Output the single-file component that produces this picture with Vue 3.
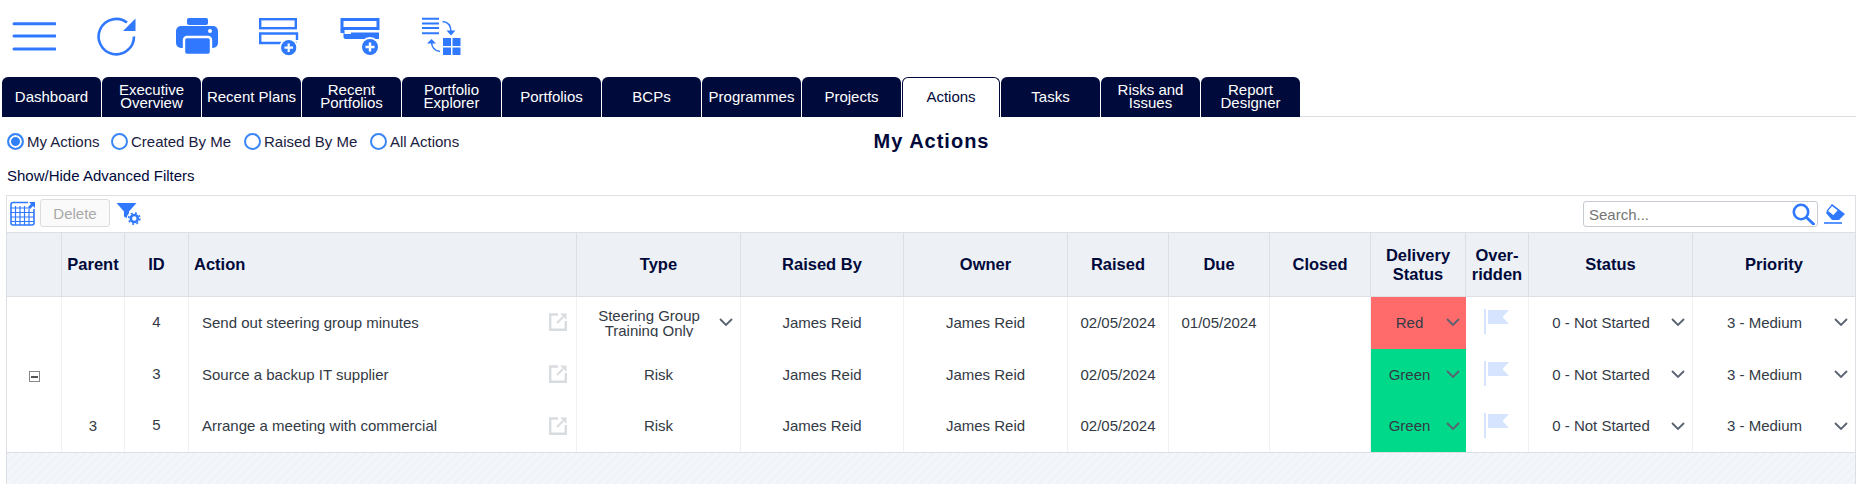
<script setup>
const iconBlue = '#3079ff'
const tabs = [
  ['Dashboard'], ['Executive', 'Overview'], ['Recent Plans'], ['Recent', 'Portfolios'],
  ['Portfolio', 'Explorer'], ['Portfolios'], ['BCPs'], ['Programmes'], ['Projects'],
  ['Actions'], ['Tasks'], ['Risks and', 'Issues'], ['Report', 'Designer']
]
const radios = [
  { label: 'My Actions', on: true, w: 104 },
  { label: 'Created By Me', on: false, w: 133 },
  { label: 'Raised By Me', on: false, w: 126 },
  { label: 'All Actions', on: false, w: 90 }
]
const headers = [
  { t: [''] }, { t: ['Parent'] }, { t: ['ID'] }, { t: ['Action'], left: true }, { t: ['Type'] },
  { t: ['Raised By'] }, { t: ['Owner'] }, { t: ['Raised'] }, { t: ['Due'] }, { t: ['Closed'] },
  { t: ['Delivery', 'Status'] }, { t: ['Over-', 'ridden'] }, { t: ['Status'] }, { t: ['Priority'] }
]
const rows = [
  { expand: false, parent: '', id: '4', action: 'Send out steering group minutes', type: ['Steering Group', 'Training Only'], select: true, due: '01/05/2024', ds: 'Red', cls: 'red' },
  { expand: true, parent: '', id: '3', action: 'Source a backup IT supplier', type: ['Risk'], select: false, due: '', ds: 'Green', cls: 'green' },
  { expand: false, parent: '3', id: '5', action: 'Arrange a meeting with commercial', type: ['Risk'], select: false, due: '', ds: 'Green', cls: 'green' }
]
</script>

<template>
  <div class="page">
    <div class="icons">
      <svg class="ic" viewBox="0 0 44 44"><g :stroke="iconBlue" stroke-width="3" stroke-linecap="round"><path d="M2 9.7H43M2 22H43M2 35H43"/></g></svg>
      <svg class="ic" viewBox="0 0 44 44"><path d="M40 22.5A17.7 17.7 0 1 1 33 8.5" fill="none" :stroke="iconBlue" stroke-width="2.6"/><path d="M41.5 4.5V17H29Z" :fill="iconBlue"/></svg>
      <svg class="ic" viewBox="0 0 44 44">
        <rect x="11" y="4" width="21" height="7" rx="2" :fill="iconBlue"/>
        <rect x="0" y="12" width="42" height="22" rx="5" :fill="iconBlue"/>
        <rect x="8" y="23" width="27" height="18" rx="3" :fill="iconBlue" stroke="#fff" stroke-width="2.4"/>
        <circle cx="34" cy="17" r="2" fill="#fff"/>
      </svg>
      <svg class="ic" viewBox="0 0 44 44">
        <rect x="2.2" y="5.2" width="35.6" height="9" fill="none" :stroke="iconBlue" stroke-width="2.4"/>
        <path d="M1 19.5H39V26M39 29H2.2V19.5" fill="none" :stroke="iconBlue" stroke-width="2.4"/>
        <circle cx="30.7" cy="33.7" r="9.6" fill="#fff"/>
        <circle cx="30.7" cy="33.7" r="7.6" :fill="iconBlue"/>
        <path d="M26.5 33.7H35M30.7 29.5V38" stroke="#fff" stroke-width="2.2"/>
      </svg>
      <svg class="ic" viewBox="0 0 44 44">
        <rect x="2" y="5.5" width="36" height="9" fill="none" :stroke="iconBlue" stroke-width="3"/>
        <path d="M0.5 15H4.5V20H11V18.5H39V25H5.5Q3.5 25 3.5 23V19H0.5Z" :fill="iconBlue"/>
        <circle cx="30" cy="33" r="10" fill="#fff"/>
        <circle cx="30" cy="33" r="8" :fill="iconBlue"/>
        <path d="M25.5 33H34.5M30 28.5V37.5" stroke="#fff" stroke-width="2.4"/>
      </svg>
      <svg class="ic" viewBox="0 0 44 44">
        <path d="M0 4.8H17M0 9.4H17M0 14H17M0 19.2H17" :stroke="iconBlue" stroke-width="2"/>
        <path d="M20.5 7.5Q29 8 29 18" fill="none" :stroke="iconBlue" stroke-width="1.5"/>
        <path d="M24.5 16.5H33.5L29 21.5Z" :fill="iconBlue"/>
        <path d="M18 37.5Q10 36.5 9.5 28" fill="none" :stroke="iconBlue" stroke-width="1.5"/>
        <path d="M5 29.5H14L9.5 25Z" :fill="iconBlue"/>
        <path d="M21 24H29V32H21ZM30.5 24H38.5V32H30.5ZM21 33.5H29V41H21ZM30.5 33.5H38.5V41H30.5Z" :fill="iconBlue"/>
      </svg>
    </div>

    <div class="tabs">
      <div v-for="t in tabs" :key="t[0]" class="tab" :class="{ active: t[0] === 'Actions' }">
        <span v-for="l in t" :key="l">{{ l }}</span>
      </div>
      <div class="tabline"></div>
    </div>

    <div class="filterbar">
      <div class="radios">
        <label v-for="r in radios" :key="r.label" class="radio" :style="{ width: r.w + 'px' }">
          <span class="dot" :class="{ on: r.on }"></span>{{ r.label }}
        </label>
      </div>
      <h1 class="title">My Actions</h1>
      <div></div>
    </div>
    <div class="advanced">Show/Hide Advanced Filters</div>

    <div class="box">
      <div class="toolbar">
        <svg class="tool-grid" viewBox="0 0 25 25">
          <path d="M18 1.5H3Q1 1.5 1 3.5V22Q1 24 3 24H22Q24 24 24 22V8" fill="none" :stroke="iconBlue" stroke-width="1.6"/>
          <path d="M1 7H20M1 11.5H24M1 16H24M1 20.5H24M5.5 5V24M10 5V24M14.5 5V24M19 8V24" :stroke="iconBlue" stroke-width="1.2"/>
          <path d="M19 1H25V7L23 5L20 8L18 6L21 3Z" :fill="iconBlue"/>
        </svg>
        <button class="del" disabled>Delete</button>
        <svg class="tool-filter" viewBox="0 0 25 25">
          <path d="M0.5 1H20.5L13 9.5V17.5L8 14.5V9.5Z" :fill="iconBlue"/>
          <circle cx="18.3" cy="16.5" r="7.6" fill="#fff"/>
          <circle cx="18.3" cy="16.5" r="3.5" fill="none" :stroke="iconBlue" stroke-width="2.6"/>
          <circle cx="18.3" cy="16.5" r="5.6" fill="none" :stroke="iconBlue" stroke-width="1.6" stroke-dasharray="2 2.4"/>
        </svg>
        <div class="grow"></div>
        <div class="search">
          <input class="search-in" placeholder="Search..." />
          <svg class="search-ic" viewBox="0 0 23 22"><circle cx="9" cy="9" r="7.2" fill="none" :stroke="iconBlue" stroke-width="2.6"/><path d="M14.5 14.5L21.5 21" :stroke="iconBlue" stroke-width="3" stroke-linecap="round"/></svg>
        </div>
        <svg class="eraser" viewBox="0 0 22 21">
          <path d="M8 1L21 11L15 17H8L2 10Z" :fill="iconBlue"/>
          <path d="M8 2.2L14.5 7.2L9.5 13L3.2 8Z" fill="#fff" :stroke="iconBlue" stroke-width="1.2"/>
          <path d="M0 20H18" :stroke="iconBlue" stroke-width="1.6"/>
        </svg>
      </div>

      <div class="grid head">
        <div v-for="(h, i) in headers" :key="i" class="hcell" :class="{ left: h.left }">
          <span v-for="l in h.t" :key="l">{{ l }}</span>
        </div>
      </div>

      <div v-for="r in rows" :key="r.id" class="grid row">
        <div class="cell">
          <span v-if="r.expand" class="expander"></span>
        </div>
        <div class="cell">{{ r.parent }}</div>
        <div class="cell up">{{ r.id }}</div>
        <div class="cell action">
          <span>{{ r.action }}</span>
          <svg class="ext" viewBox="0 0 18 18">
            <path d="M9 1.5H1.2V16.8H16.8V8" fill="none" stroke="#d9dcdf" stroke-width="2.4"/>
            <path d="M8 10L14 4" stroke="#d9dcdf" stroke-width="2"/>
            <path d="M11 0.5H17.5V7Z" fill="#d9dcdf"/>
          </svg>
        </div>
        <div class="cell" :class="{ sel: r.select }">
          <span class="typetext" :class="{ clip: r.select }"><span v-for="l in r.type" :key="l">{{ l }}</span></span>
          <svg v-if="r.select" class="chev" viewBox="0 0 14 8"><path d="M1 1L7 7L13 1" fill="none" stroke="#5a6272" stroke-width="1.8"/></svg>
        </div>
        <div class="cell">James Reid</div>
        <div class="cell">James Reid</div>
        <div class="cell">02/05/2024</div>
        <div class="cell">{{ r.due }}</div>
        <div class="cell"></div>
        <div class="cell sel ds" :class="r.cls">
          <span class="seltext">{{ r.ds }}</span>
          <svg class="chev" viewBox="0 0 14 8"><path d="M1 1L7 7L13 1" fill="none" stroke="#5a6272" stroke-width="1.8"/></svg>
        </div>
        <div class="cell">
          <svg class="flag" viewBox="0 0 26 26">
            <path d="M1 0V25" stroke="#d6e4ff" stroke-width="2"/>
            <path d="M4 1H25L18.5 8L25 15H4Z" fill="#d6e4ff"/>
          </svg>
        </div>
        <div class="cell sel"><span class="seltext">0 - Not Started</span><svg class="chev" viewBox="0 0 14 8"><path d="M1 1L7 7L13 1" fill="none" stroke="#5a6272" stroke-width="1.8"/></svg></div>
        <div class="cell sel"><span class="seltext">3 - Medium</span><svg class="chev" viewBox="0 0 14 8"><path d="M1 1L7 7L13 1" fill="none" stroke="#5a6272" stroke-width="1.8"/></svg></div>
      </div>

      <div class="foot"></div>
    </div>
  </div>
</template>

<style>
html, body { margin: 0; overflow: hidden; background: #fff; }
</style>

<style scoped>
.page {
  width: 1856px;
  height: 484px;
  overflow: hidden;
  font-family: "Liberation Sans", Arial, sans-serif;
  font-size: 14px;
  color: #00093a;
  background: #fff;
}
.icons { display: flex; gap: 38px; height: 63px; padding: 14px 0 0 12px; }
.ic { width: 44px; height: 44px; display: block; }

.tabs { display: flex; gap: 1px; padding-left: 2px; height: 40px; }
.tab {
  width: 99px;
  height: 40px;
  padding-bottom: 2px;
  box-sizing: border-box;
  background: #010b3b;
  color: #fff;
  border-radius: 6px 6px 0 0;
  display: flex;
  flex-direction: column;
  justify-content: center;
  align-items: center;
  font-size: 15px;
  line-height: 13px;
  white-space: nowrap;
}
.tab.active { width: 98px; background: #fff; color: #00093a; border: 1px solid #00093a; border-bottom: 0; }
.tabline { flex: 1; margin-left: -1px; border-bottom: 1px solid #dedede; }

.filterbar {
  display: grid;
  grid-template-columns: 1fr auto 1fr;
  align-items: center;
  height: 32px;
  margin-top: 8px;
  padding-left: 7px;
}
.radios { display: flex; }
.radio { display: flex; align-items: center; gap: 3px; font-size: 15px; color: #1a2040; white-space: nowrap; }
.dot { width: 17px; height: 17px; box-sizing: border-box; border: 2px solid #3a86f5; border-radius: 50%; flex: none; background: #fff; }
.dot.on { background: #2f7ff5; box-shadow: inset 0 0 0 2px #fff; }
.title { margin: 0; font-size: 20px; font-weight: 700; letter-spacing: 1px; }
.advanced { height: 38px; padding: 10px 0 0 7px; box-sizing: border-box; line-height: 18px; font-size: 15px; }

.box { margin-left: 6px; border: 1px solid #dcdfe3; border-bottom: 0; }
.toolbar { display: flex; align-items: flex-start; height: 36px; padding: 3px 9px 0 3px; box-sizing: border-box; }
.tool-grid { width: 25px; height: 25px; margin: 2px 5px 0 0; }
.del {
  width: 70px; height: 28px; box-sizing: border-box;
  background: #fafafa; border: 1px solid #dcdcdc; border-radius: 3px;
  color: #a9a9a9; font: 15px "Liberation Sans", Arial, sans-serif; padding: 0;
}
.tool-filter { width: 25px; height: 25px; margin: 3px 0 0 6px; }
.grow { flex: 1; }
.search {
  width: 235px; height: 26px; margin-top: 2px; box-sizing: border-box;
  border: 1px solid #c6cbd2; border-radius: 3px;
  display: flex; align-items: center; padding: 0 2px 0 5px;
}
.search-in { flex: 1; min-width: 0; border: 0; outline: 0; padding: 0; font: 15px "Liberation Sans", Arial, sans-serif; color: #555; }
.search-in::placeholder { color: #757575; }
.search-ic { width: 23px; height: 22px; }
.eraser { width: 22px; height: 21px; margin: 4px 0 0 6px; }

.grid {
  display: grid;
  grid-template-columns: 55px 63px 64px 388px 164px 163px 164px 101px 101px 101px 95px 63px 164px 162px;
}
.head { height: 65px; background: #edf1f6; border-top: 1px solid #dcdfe3; border-bottom: 1px solid #dcdfe3; box-sizing: border-box; }
.hcell {
  border-right: 1px solid #dcdfe3;
  display: flex; flex-direction: column; align-items: center; justify-content: center;
  font-weight: 700; font-size: 16.5px; line-height: 19px;
}
.hcell:last-child { border-right: 0; }
.hcell.left { align-items: flex-start; padding-left: 5px; }

.row { height: 52px; color: #333a45; font-size: 15px; }
.row:nth-of-type(5) { height: 51px; }
.cell {
  border-right: 1px solid #f0f1f3;
  box-sizing: border-box;
  display: flex; align-items: center; justify-content: center;
  min-width: 0;
  padding-bottom: 2px;
}
.cell:last-child { border-right: 0; }
.up { padding-bottom: 4px; }
.action { justify-content: space-between; padding: 0 9px 2px 13px; }
.ext { width: 18px; height: 18px; }
.expander {
  width: 11px; height: 11px; box-sizing: border-box; margin-top: 5px;
  border: 1px solid #888; background: linear-gradient(#555, #555) center / 7px 2px no-repeat;
}
.typetext { display: flex; flex-direction: column; align-items: center; flex: 1; line-height: 15px; }
.typetext.clip { height: 29px; overflow: hidden; }
.sel { padding: 0 7px 2px 2px; }
.seltext { flex: 1; text-align: center; }
.chev { width: 14px; height: 8px; flex: none; }
.ds { border-right-color: transparent; padding-right: 5px; }
.red { background: #ff6b6b; }
.green { background: #00d98a; }
.flag { width: 26px; height: 26px; }
.foot {
  height: 32px;
  border-top: 1px solid #dcdfe3;
  background: repeating-linear-gradient(135deg, #f0f4f9 0 3px, #f3f6fa 3px 6px);
}
</style>
